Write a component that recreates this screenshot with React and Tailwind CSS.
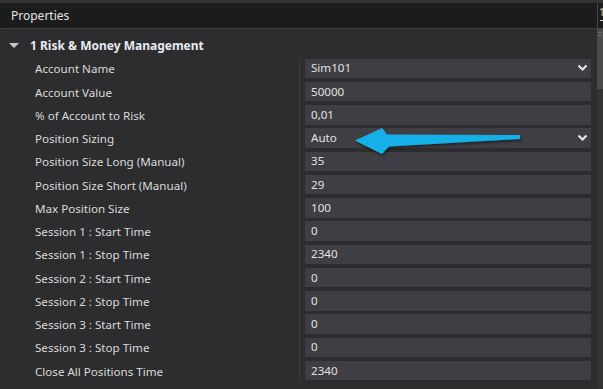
import React from "react";

const rows = [
  ["Account Name", "Sim101", true],
  ["Account Value", "50000"],
  ["% of Account to Risk", "0,01"],
  ["Position Sizing", "Auto", true],
  ["Position Size Long (Manual)", "35"],
  ["Position Size Short (Manual)", "29"],
  ["Max Position Size", "100"],
  ["Session 1 : Start Time", "0"],
  ["Session 1 : Stop Time", "2340"],
  ["Session 2 : Start Time", "0"],
  ["Session 2 : Stop Time", "0"],
  ["Session 3 : Start Time", "0"],
  ["Session 3 : Stop Time", "0"],
  ["Close All Positions Time", "2340"],
];

function Chevron() {
  return (
    <svg width="11" height="8" viewBox="0 0 11 8" className="shrink-0">
      <polyline points="1.5,1.5 5.5,5.5 9.5,1.5" fill="none" stroke="#e6e6e6" strokeWidth="2.2" />
    </svg>
  );
}

export default function App() {
  return (
    <div
      className="w-[603px] h-[389px] overflow-hidden bg-[#2d2d30] relative text-[11.6px] text-[#dadada]"
      style={{ fontFamily: '"Noto Sans", "Open Sans", sans-serif' }}
    >
      <div className="h-[3px] bg-[#333336]" />
      <div className="h-[26px] bg-[#1c1c1d] border-b border-[#404042] flex items-center pl-[11px] relative">
        <span className="text-[#e4e4e4] leading-none text-[12px]">Properties</span>
        <div className="absolute right-0 top-0 h-full w-[6px] border-l border-[#4a4a4a] overflow-hidden">
          <span className="absolute left-[1px] top-[4px] text-[10px] text-[#cfcfcf] leading-none">1</span>
          <div className="absolute left-[2px] top-[17px] w-[3px] h-px bg-[#cfcfcf]" />
        </div>
      </div>
      <div className="flex h-[359px]">
        <div className="w-[3px] border-r border-[#27272a]" />
        <div className="flex-1 pt-[5px]">
          <div className="h-[23.5px] flex items-center">
            <svg width="10" height="6" viewBox="0 0 10 6" className="ml-[6px] mr-[11px]">
              <polygon points="0,0 10,0 5,5" fill="#c8c8c8" />
            </svg>
            <span className="font-bold text-[#e8eaf0] text-[12px]">1 Risk &amp; Money Management</span>
          </div>
          <div className="flex flex-col">
            {rows.map(([label, value, dd]) => (
              <div key={label} className="h-[23.25px] flex">
                <div className="w-[297px] pl-[32px] flex items-center border-r border-[#3c3c40] leading-none">
                  {label}
                </div>
                <div className="flex-1 pl-[5px] pr-[6px] pt-[1px]">
                  <div className="h-[19.5px] bg-[#3e3e44] flex items-center pl-[6px] pr-[3px] justify-between leading-none text-[#e2e2e2]">
                    <span>{value}</span>
                    {dd && <Chevron />}
                  </div>
                </div>
              </div>
            ))}
          </div>
        </div>
        <div className="w-[6px] bg-[#333336] flex flex-col">
          <div className="h-[60px] bg-[#4b4b4d] flex flex-col items-center pt-[3px] gap-[2px]">
            <div className="w-[4px] h-px bg-[#6a6a6a]" />
            <div className="w-[4px] h-px bg-[#6a6a6a]" />
          </div>
        </div>
      </div>
      <svg
        className="absolute left-0 top-0 pointer-events-none"
        width="603"
        height="389"
        viewBox="0 0 603 389"
      >
        <defs>
          <filter id="sh" x="-10%" y="-50%" width="120%" height="200%">
            <feDropShadow dx="1" dy="2" stdDeviation="1.5" floodColor="#000" floodOpacity="0.45" />
          </filter>
        </defs>
        <path
          d="M355,140.5 L382,128 Q385,131.5 387,134.5 L520,135 L520,139 L389,146.5 Q385,150.5 382,154 Z"
          fill="#12b0e8"
          filter="url(#sh)"
        />
      </svg>
    </div>
  );
}
